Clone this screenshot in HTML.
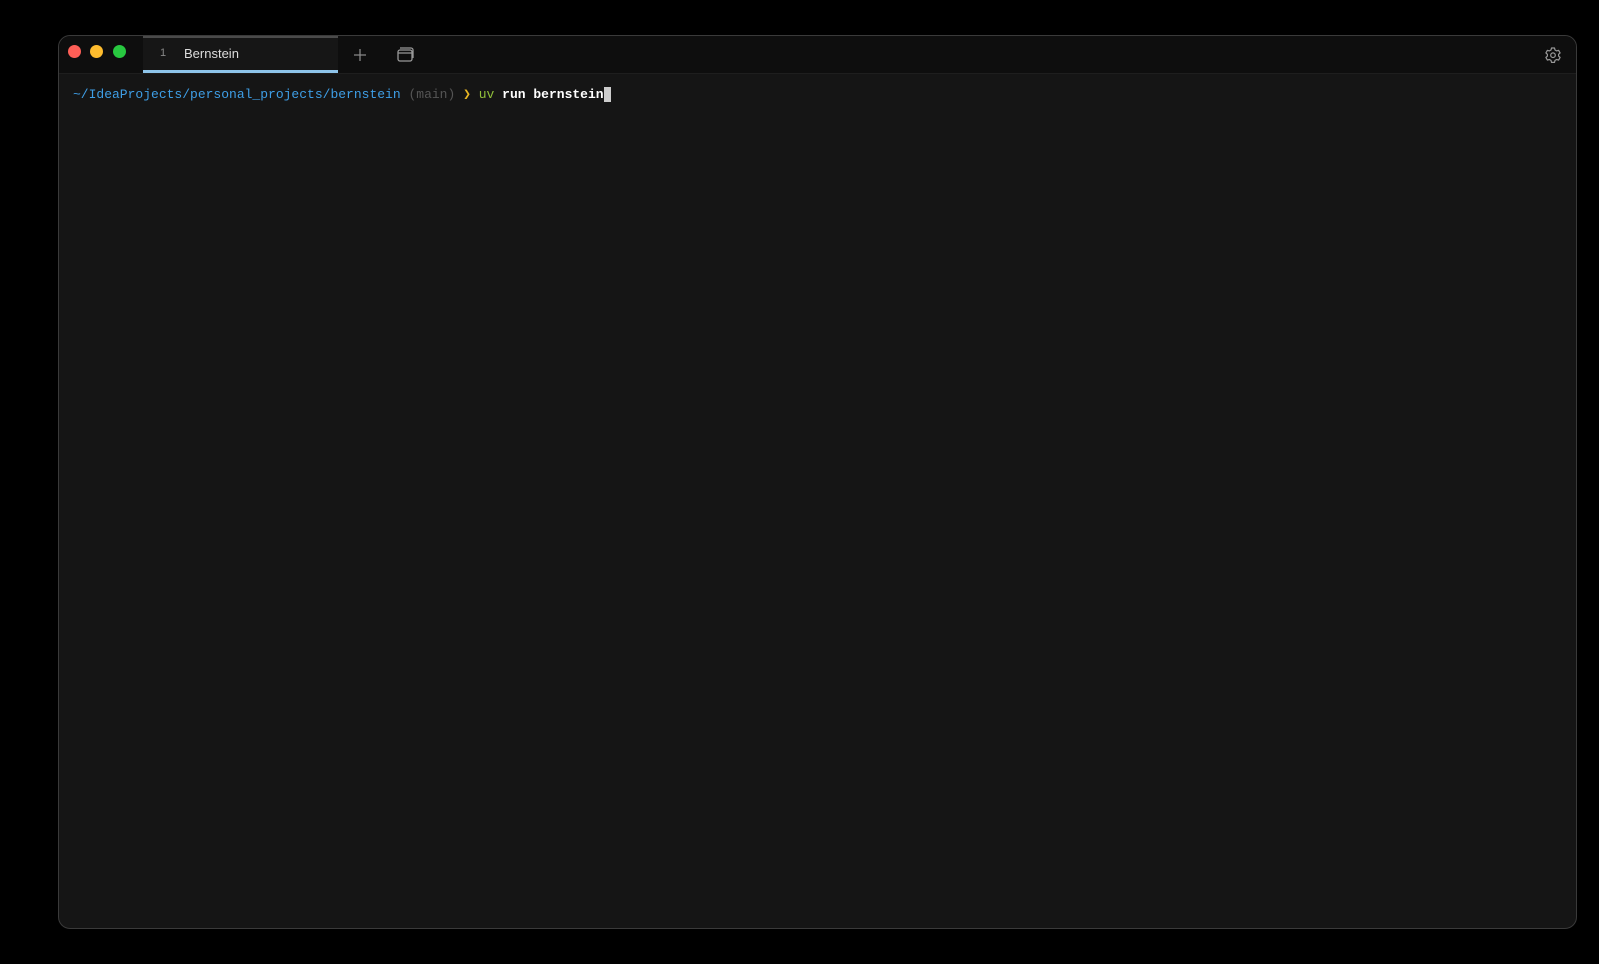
<!DOCTYPE html>
<html><head><style>
body{margin:0;width:1599px;height:964px;background:#000;position:relative;overflow:hidden;font-family:"Liberation Sans",sans-serif}
.win{position:absolute;left:58px;top:35px;width:1517px;height:892px;border:1px solid #3a3a3a;border-radius:12px;background:#151515;overflow:hidden}
.bar{position:absolute;left:0;top:0;right:0;height:37px;background:#0e0e0e;border-bottom:1px solid #1e1e1e}
.dot{position:absolute;top:9px;width:13px;height:13px;border-radius:50%}
.tab{position:absolute;left:84px;top:0;width:195px;height:37px;background:#161616;border-top:2px solid #4a4a4a;box-sizing:border-box}
.tab .u{position:absolute;left:0;right:0;bottom:0;height:3px;background:#8ec4ea}
.term{position:absolute;left:14px;top:51px;font-family:"Liberation Mono",monospace;font-size:13px;color:#ddd;white-space:pre}
</style></head><body>
<div class="win">
 <div class="bar">
  <div class="dot" style="left:9px;background:#fe5f57"></div>
  <div class="dot" style="left:31px;background:#febc2e"></div>
  <div class="dot" style="left:54px;background:#28c840"></div>
  <div class="tab">
   <span style="position:absolute;left:17px;top:9px;font-size:11px;color:#888">1</span>
   <span style="position:absolute;left:41px;top:8px;font-size:13px;color:#ddd">Bernstein</span>
   <div class="u"></div>
  </div>
  <svg style="position:absolute;left:293px;top:11px" width="16" height="16"><path d="M8 2v12M2 8h12" stroke="#888" stroke-width="1.3"/></svg>
  <svg style="position:absolute;left:336px;top:9px" width="20" height="18"><rect x="3" y="5" width="14" height="11" rx="2" fill="none" stroke="#999" stroke-width="1.3"/><path d="M5 3h11a2 2 0 0 1 2 2v8" fill="none" stroke="#999" stroke-width="1.3"/><path d="M3 8h14" stroke="#999" stroke-width="1.3"/></svg>
  <svg style="position:absolute;left:1485px;top:10px" width="18" height="18" viewBox="0 0 18 18"><path d="M7.5 2h3l.5 2 1.6.9 2-.6 1.5 2.6-1.5 1.4v1.8l1.5 1.4-1.5 2.6-2-.6-1.6.9-.5 2h-3l-.5-2-1.6-.9-2 .6L1.9 11.5l1.5-1.4V8.3L1.9 6.9l1.5-2.6 2 .6L7 4z" fill="none" stroke="#999" stroke-width="1.2" stroke-linejoin="round"/><circle cx="9" cy="9.2" r="2.3" fill="none" stroke="#999" stroke-width="1.2"/></svg>
 </div>
 <div class="term"><span style="color:#3e9ee6">~/IdeaProjects/personal_projects/bernstein</span> <span style="color:#555">(main)</span> <span style="color:#e8b623">❯</span> <span style="color:#8fbf3a">uv</span> <b style="color:#fff">run bernstein</b><span style="background:#ccc;color:#ccc">&#8203; </span></div>
</div>
</body></html>
